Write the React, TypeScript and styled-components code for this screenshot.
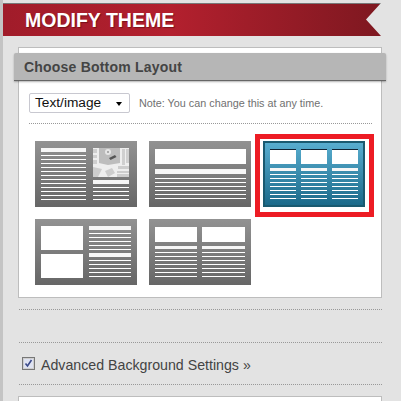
import React from 'react';
import styled, { createGlobalStyle, css } from 'styled-components';

const Global = createGlobalStyle`
  html, body { margin: 0; padding: 0; background: #e2e2e2; }
  *, *::after { box-sizing: border-box; }
`;

const Page = styled.div`
  position: relative;
  width: 401px;
  height: 401px;
  overflow: hidden;
  padding-top: 3px;
  font-family: 'Liberation Sans', Arial, sans-serif;
  background: #e3e3e3;
  border-left: 3px solid #c4c4c4;
`;

const Ribbon = styled.h1`
  width: 381px;
  height: 33px;
  margin: 0 0 0 -3px;
  padding: 0 0 0 25px;
  font-size: 19.5px;
  line-height: 32px;
  font-weight: 700;
  color: #fff;
  text-shadow: 1px 1px 1px rgba(60, 0, 0, 0.45);
  background: linear-gradient(90deg, #a01c2a 0%, #b3202e 45%, #8c1a24 85%, #7e1820 100%);
  border-top: 1px solid #777;
  clip-path: polygon(0 0, 100% 0, 366px 50%, 100% 100%, 0 100%);
`;

const Panel = styled.section`
  margin: 11px 0 0 15px;
  width: 364px;
  height: 251px;
  background: #fff;
  border: 1px solid #bdbdbd;
  padding-top: 5px;
`;

const PanelTitle = styled.h2`
  margin: 0 0 0 -5px;
  width: 372px;
  height: 28px;
  padding-left: 10px;
  font-size: 14px;
  line-height: 29px;
  font-weight: 700;
  letter-spacing: 0.2px;
  color: #444;
  background: #b6b6b6;
  border-bottom: 1px solid #666;
  border-radius: 2px 2px 0 0;
  box-shadow: 0 1px 2px rgba(0, 0, 0, 0.3);
`;

const OptionsRow = styled.div`
  display: flex;
  align-items: center;
  gap: 9px;
  margin: 12px 9px 0 10px;
  padding-bottom: 10px;
  border-bottom: 1px dotted #999;
`;

const SelectBox = styled.div`
  position: relative;
  width: 101px;
  height: 20px;
  padding-left: 5px;
  border: 1px solid #c8c8d0;
  border-radius: 2px;
  font-size: 13.7px;
  line-height: 18px;
  color: #111;
  background: #fff;
  &::after {
    content: '';
    position: absolute;
    right: 7px;
    top: 8px;
    width: 0;
    height: 0;
    border-style: solid;
    border-color: #000 transparent transparent;
    border-width: 4px 3.5px 0;
  }
`;

const Note = styled.span`
  font-size: 10.8px;
  color: #707070;
`;

const ThumbGrid = styled.div`
  display: grid;
  grid-template-columns: repeat(3, 102px);
  gap: 12px;
  margin: 17px 0 0 16px;
`;

const Thumb = styled.div<{ $active?: boolean; $top?: number; $cols: string; $gap?: number }>`
  position: relative;
  height: 66px;
  display: grid;
  grid-template-columns: ${(p) => p.$cols};
  column-gap: ${(p) => p.$gap ?? 5}px;
  padding: ${(p) => p.$top ?? 8}px 0 0 6px;
  color: #fff;
  background: linear-gradient(180deg, #929292 0%, #666 100%);
  ${(p) =>
    p.$active &&
    css`
      padding-left: 5px;
      border: 2px solid #1a5a70;
      background: linear-gradient(180deg, #58adcf 0%, #1b6a8a 100%);
      &::after {
        content: '';
        position: absolute;
        left: -10px;
        top: -9px;
        width: 119px;
        height: 83px;
        border: 5px solid #ed1c24;
      }
    `}
`;

const Col = styled.div`
  display: flex;
  flex-direction: column;
`;

const Pic = styled.div<{ $h: number; $mark?: boolean; $mb?: number }>`
  height: ${(p) => p.$h}px;
  margin-bottom: ${(p) => p.$mb ?? 4}px;
  background: #fff;
  ${(p) => p.$mark && 'border-top: 1px solid #123;'}
`;

const Head = styled.div<{ $h?: number; $mb?: number }>`
  height: ${(p) => p.$h ?? 4}px;
  margin-bottom: ${(p) => p.$mb ?? 2}px;
  background: #f6f6f6;
`;

const Line = styled.div`
  height: 1px;
  margin-bottom: 3px;
  background: #fff;
`;

const Rule = styled.div<{ $top: number }>`
  margin: ${(p) => p.$top}px 0 0 16px;
  width: 363px;
  border-top: 1px dotted #999;
`;

const CheckRow = styled.label`
  display: flex;
  align-items: center;
  gap: 6px;
  height: 41px;
  padding-left: 19px;
  font-size: 14.2px;
  color: #444;
`;

const CheckText = styled.span`
  margin-top: 2px;
`;

const CheckBox = styled.span`
  width: 13px;
  height: 13px;
  display: block;
  background: #dfe3f2;
  border: 1px solid #777;
  box-shadow: inset 0 0 0 1px #cfcfcf;
  svg { display: block; }
`;

const NextPanel = styled.div`
  margin: 11px 0 0 15px;
  width: 364px;
  height: 40px;
  background: #fff;
  border: 1px solid #bdbdbd;
`;

const lines = (n: number) => Array.from({ length: n }, (_, i) => <Line key={i} />);

const MapPic = () => (
  <svg width="36" height="29" viewBox="0 0 36 29" style={{ display: 'block', marginBottom: 3 }}>
    <rect width="36" height="29" fill="#eee" />
    <path d="M6 0H27V15L15 17 6 15z" fill="#bdbdbd" />
    <path d="M0 1h4v4H0zM0 7h4v3H0zM0 12h4v4H0zM29 1h3v16h-3zM33 1h3v14h-3z" fill="#cfcfcf" />
    <path d="M0 19l9 2-4 8H0zM12 23l7-3 3 5-7 4zM25 18h11v3H25zM24 23h12v2H24zM24 26h12v3H24z" fill="#cdcdcd" />
    <circle cx="15" cy="4" r="3" fill="#e6e6e6" />
    <circle cx="15" cy="4" r="1" fill="#999" />
    <path d="M16 10l6-3 1.5 2-6 3z" fill="#555" />
  </svg>
);

const BlueCols = () => (
  <>
    {[0, 1, 2].map((i) => (
      <Col key={i}>
        <Pic $h={15} $mark />
        <Head $h={3} $mb={3} />
        {lines(7)}
      </Col>
    ))}
  </>
);

export default function App() {
  return (
    <Page>
      <Global />
      <Ribbon>MODIFY THEME</Ribbon>
      <Panel>
        <PanelTitle>Choose Bottom Layout</PanelTitle>
        <OptionsRow>
          <SelectBox>Text/image</SelectBox>
          <Note>Note: You can change this at any time.</Note>
        </OptionsRow>
        <ThumbGrid>
          <Thumb $top={7} $cols="45px 36px" $gap={7}>
            <Col>
              <Head $mb={3} />
              {lines(12)}
            </Col>
            <Col>
              <MapPic />
              <Head $mb={3} />
              {lines(4)}
            </Col>
          </Thumb>
          <Thumb $cols="91px">
            <Col>
              <Pic $h={15} $mb={5} />
              <Head $h={5} $mb={4} />
              {lines(6)}
            </Col>
          </Thumb>
          <Thumb $active $top={6} $cols="26px 26px 26px">
            <BlueCols />
          </Thumb>
          <Thumb $top={7} $cols="42px 42px" $gap={6}>
            <Col>
              <Pic $h={24} />
              <Pic $h={24} />
            </Col>
            <Col>
              <Head $mb={3} />
              {lines(5)}
              <Head $mb={3} />
              {lines(5)}
            </Col>
          </Thumb>
          <Thumb $cols="42px 43px">
            <Col>
              <Pic $h={15} />
              <Head $h={3} $mb={3} />
              {lines(7)}
            </Col>
            <Col>
              <Pic $h={15} />
              <Head $h={3} $mb={3} />
              {lines(7)}
            </Col>
          </Thumb>
        </ThumbGrid>
      </Panel>
      <Rule $top={11} />
      <Rule $top={32} />
      <CheckRow>
        <CheckBox>
          <svg width="11" height="11" viewBox="0 0 11 11">
            <path d="M2.5 5.5l2 2.5 4-6" fill="none" stroke="#3b4a8a" strokeWidth="1.6" />
          </svg>
        </CheckBox>
        <CheckText>Advanced Background Settings »</CheckText>
      </CheckRow>
      <Rule $top={0} />
      <NextPanel />
    </Page>
  );
}
